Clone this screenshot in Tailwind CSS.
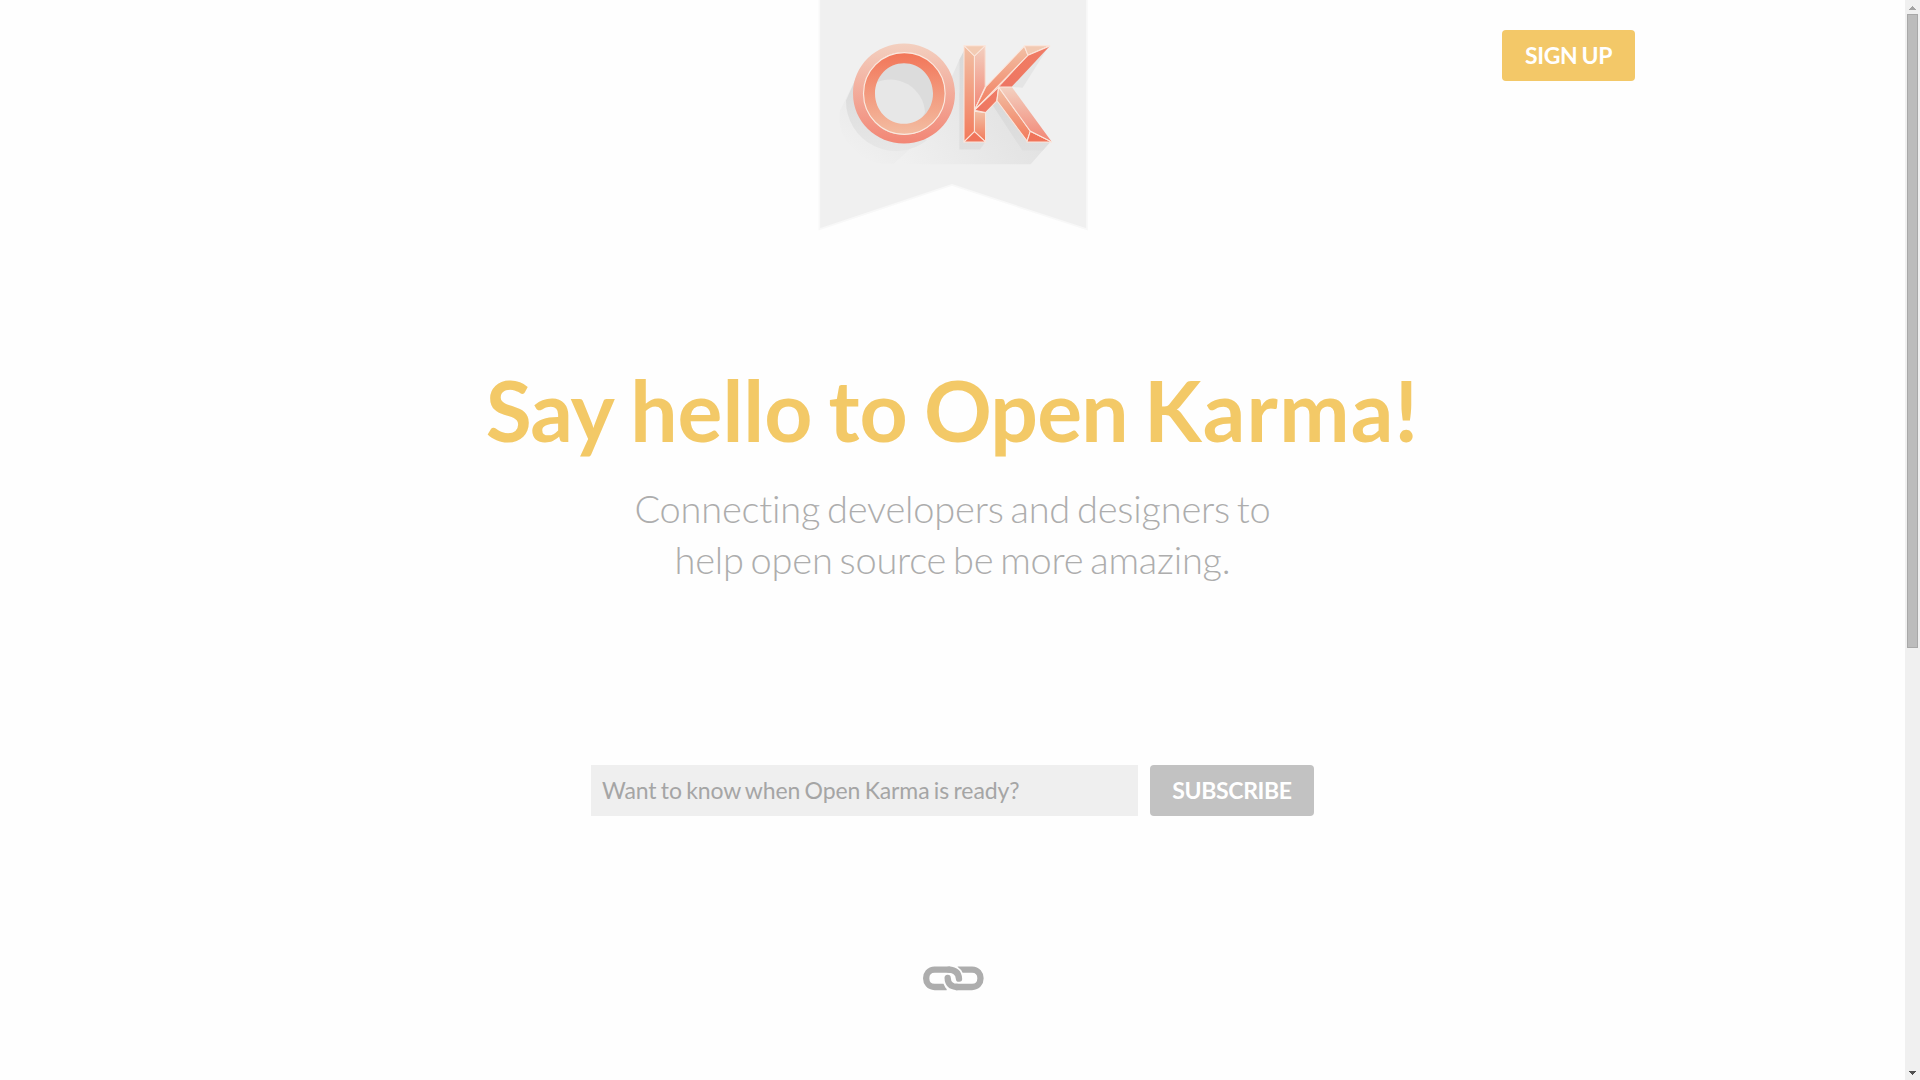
<!DOCTYPE html>
<html lang="en">
<head>
<meta charset="utf-8">
<title>Open Karma</title>
<script src="https://cdn.jsdelivr.net/npm/@tailwindcss/browser@4"></script>
</head>
<body class="flex h-[1080px] w-[1920px] overflow-hidden bg-[#fefefe] font-['Lato',sans-serif]">
<div class="flex w-[1905px] flex-col items-center">
  <header class="grid h-[240px] w-[1365px] grid-cols-[1fr_285px_1fr]">
    <div></div>
    <svg class="h-[240px] w-[285px]" viewBox="0 0 855 720" role="img" aria-label="OK">
      <defs>
        <linearGradient id="outer" x1="0" y1="0" x2="0" y2="1"><stop offset="0" stop-color="#f3d0c0"/><stop offset="1" stop-color="#f28675"/></linearGradient>
        <linearGradient id="inner" x1="0" y1="0" x2="0" y2="1"><stop offset="0" stop-color="#f27558"/><stop offset="1" stop-color="#f3bda2"/></linearGradient>
        <linearGradient id="left" x1="0" y1="0" x2="0" y2="1"><stop offset="0" stop-color="#f2c0a5"/><stop offset="1" stop-color="#f27a5b"/></linearGradient>
        <linearGradient id="dark" x1="0" y1="1" x2="1" y2="0"><stop offset="0" stop-color="#ed7463"/><stop offset=".5" stop-color="#f07a62"/><stop offset="1" stop-color="#ef7c68"/></linearGradient>
        <linearGradient id="far" gradientUnits="userSpaceOnUse" x1="290" y1="510" x2="620" y2="300"><stop offset="0" stop-color="#f0f0f0"/><stop offset="1" stop-color="#e2e2e2"/></linearGradient>
        <linearGradient id="near" x1="0" y1="0" x2="0" y2="1"><stop offset="0" stop-color="#d9d9d9"/><stop offset="1" stop-color="#dfdfdf"/></linearGradient>
        <linearGradient id="ring" x1="0" y1="0" x2="0" y2="1"><stop offset="0" stop-color="#dadada"/><stop offset="1" stop-color="#e7e7e7"/></linearGradient>
        <linearGradient id="fade" gradientUnits="userSpaceOnUse" x1="300" y1="300" x2="160" y2="480"><stop offset="0" stop-color="#e6e6e6"/><stop offset="1" stop-color="#f0f0f0"/></linearGradient>
      </defs>
      <path d="M28-5V688L426 555 831 688V-5Z" fill="#f0f0f0" stroke="#f8f8f8" stroke-width="5"/>
      <g transform="translate(0 1.500)">
      <path d="M152 205L90 330Q80 400 130 445Q170 490 230 490H440L460 280Z" fill="url(#fade)"/>
      <path d="M448 178L350 400 250 491H662L722 423 570 260 448 300Z" fill="url(#far)"/>
      <path d="M716 138L638 262 603 259Z" fill="#e5e5e5"/>
      <path d="M135 240L108 300A150 150 0 0 0 350 420L300 300Z" fill="url(#ring)"/>
      <circle cx="282" cy="279" r="100" fill="#dcdcdc"/>
      <path d="M195 248A104 104 0 0 1 345 335Q335 360 310 375H230Q195 350 190 280Z" fill="#e7e7e7"/>
      <path d="M462 150L448 178V447H510L527 423V150Z" fill="url(#near)"/>
      <path d="M560 300L545 310 637 450H698L722 423Z" fill="url(#near)"/>
      <path d="M282 129C366 129 435 195 435 279S366 429 282 429 129 363 129 279 198 129 282 129ZM282 155C213 155 161 210 161 279S213 403 282 403 405 348 405 279 351 155 282 155Z" fill="url(#outer)" fill-rule="evenodd"/>
      <path d="M283 156C215 156 160 211 160 279S215 402 283 402 406 347 406 279 351 156 283 156ZM282 188C330 188 369 228 369 279S330 370 282 370 195 330 195 279 234 188 282 188Z" fill="url(#inner)" fill-rule="evenodd"/>
      <circle cx="283" cy="279" r="122.500" fill="none" stroke="#fbe9df" stroke-width="3.500"/>
      <g transform="translate(-4.600 0) scale(1.010 1.003)" stroke="#fbe6dc" stroke-width="3" stroke-linejoin="round" stroke-linecap="round">
        <path d="M462 135L493 166V392L462 423Z" fill="url(#left)"/>
        <path d="M525 135L493 166V328L525 258Z" fill="url(#outer)"/>
        <path d="M462 135H525L493 166Z" fill="#f3cbb3"/>
        <path d="M493 331L526 336V423L493 392Z" fill="url(#left)"/>
        <path d="M462 423L493 392 526 423Z" fill="#f0745a"/>
        <path d="M493 328L527 258 641 137 652 164 565 259Z" fill="url(#left)"/>
        <path d="M641 135H716L652 164Z" fill="#f2c9b2"/>
        <path d="M717 136L652 164 566 259H603Z" fill="url(#dark)" stroke="none"/>
        <path d="M493 328L565 259 559 301 526 335Z" fill="url(#dark)"/>
        <path d="M565 259L560 300 649 420 659 391Z" fill="url(#left)"/>
        <path d="M565 259H604L723 423 659 391Z" fill="url(#outer)" stroke="none"/>
        <path d="M659 391L649 423H722Z" fill="#f0745a"/>
        <path d="M717 136L652 164 493 328M603 259H565L659 391 722 423" fill="none"/>
      </g>
      </g>
    </svg>
    <div class="flex items-start justify-end pt-[30px]">
      <button class="h-[51px] w-[133px] rounded bg-[#f3c868] text-[23px] font-bold tracking-[-0.4px] text-white [word-spacing:-1px]">SIGN UP</button>
    </div>
  </header>
  <main class="flex flex-col items-center">
    <h1 class="mt-[120px] h-[100px] whitespace-nowrap text-[84px] leading-[100px] font-bold text-[#f3c967] [word-spacing:-4.2px]"><span class="tracking-[-1px]">Say</span> hello to <span class="tracking-[-0.8px]">Open</span> <span class="tracking-[1.2px]">Karma!</span></h1>
    <p class="mt-[23px] text-center text-[38px] leading-[51px] font-light tracking-[-0.2px] whitespace-nowrap text-[#adadad] [word-spacing:-3.3px]">Connecting developers and designers to<br>help open source be more amazing.</p>
    <form class="mt-[180px] flex gap-3">
      <input class="h-[51px] w-[547px] bg-[#efefef] px-3 pb-0.5 pl-[11px] text-[23px] tracking-[-0.1px] text-[#a5a5a5] [word-spacing:-1.4px] placeholder:text-[#a5a5a5]" placeholder="Want to know when Open Karma is ready?">
      <button type="button" class="h-[51px] w-[164px] rounded bg-[#c2c2c2] text-[23px] font-bold tracking-[-0.35px] text-white">SUBSCRIBE</button>
    </form>
    <svg class="mt-[139px] h-[45px] w-[79px]" viewBox="0 0 237 135" fill="none" stroke="#adadad" stroke-width="19">
      <path d="M101 96H65C31 96 31 44 65 44H112"/>
      <path d="M134 44H177C211 44 211 96 177 96H128"/>
      <g stroke="#fefefe" stroke-width="28">
        <path d="M118 44Q138 50 138 70"/>
        <path d="M122 96Q104 92 104 74"/>
      </g>
      <g stroke-linecap="round">
        <path d="M108 44Q136 45 138 71"/>
        <path d="M132 96Q105 95 104 69"/>
      </g>
    </svg>
  </main>
</div>
<aside class="flex w-[15px] flex-col items-center bg-[#f0f0f0]">
  <svg class="h-[14px] w-[15px]" viewBox="0 0 15 14" fill="#a3a3a3"><path d="M7 6h1v1h1v1h1v1h1v1H4V9h1V8h1V7h1z"/></svg>
  <div class="mr-px h-[634px] w-[11px] border border-[#a8a8a8] bg-[#bcbcbc]"></div>
  <svg class="mt-auto h-[14px] w-[15px]" viewBox="0 0 15 14" fill="#505050"><path d="M4 5h7v1h-1v1H9v1H8v1H7V8H6V7H5V6H4z"/></svg>
</aside>
</body>
</html>
